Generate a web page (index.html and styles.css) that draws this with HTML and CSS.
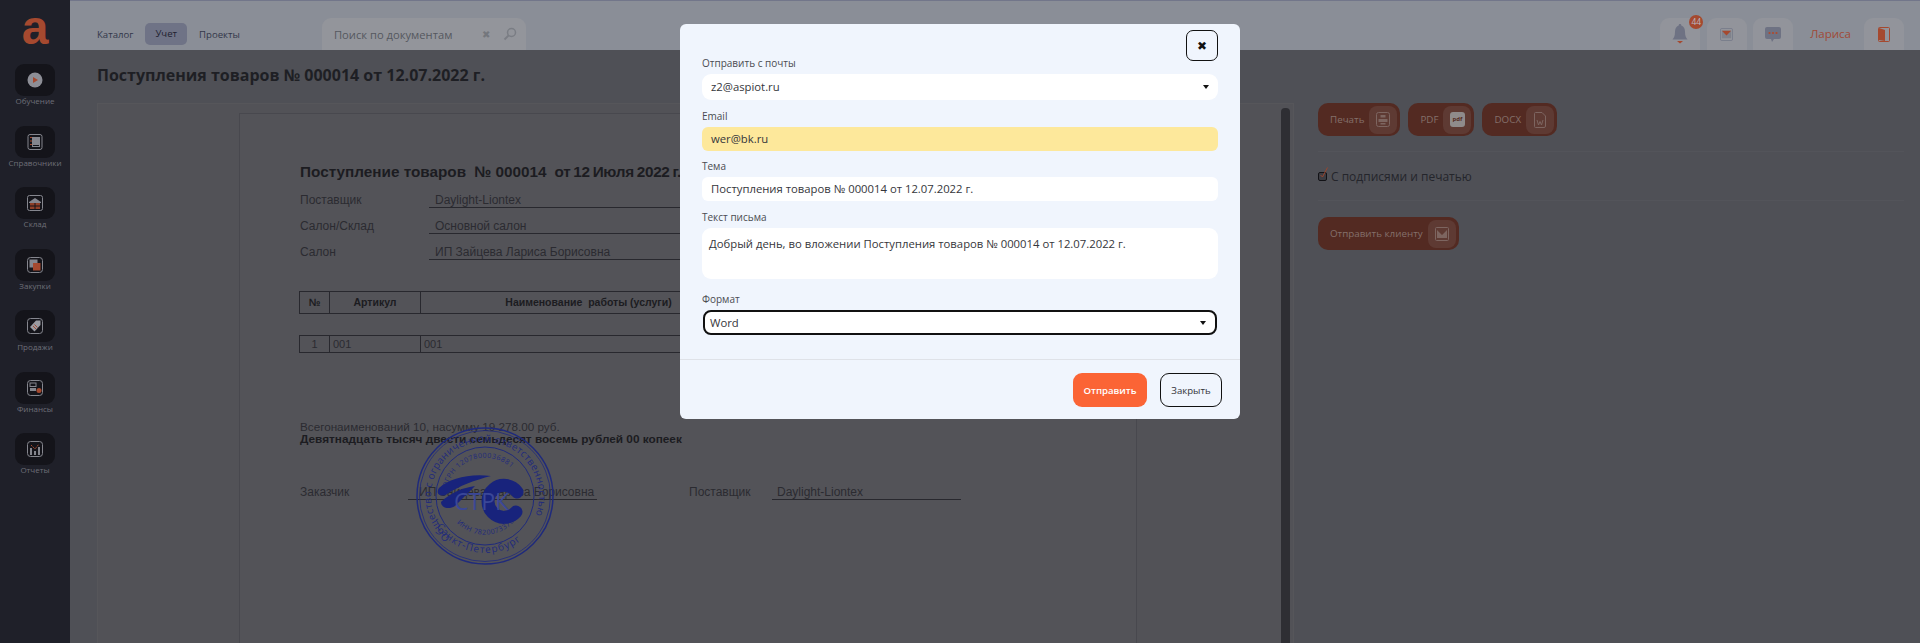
FILE: index.html
```html
<!DOCTYPE html>
<html lang="ru">
<head>
  <meta charset="UTF-8">
  <title>Поступления товаров № 000014 от 12.07.2022 г.</title>
  <link rel="stylesheet" href="styles.css">
</head>
<body>
  <div class="app">
    <aside class="sidebar">
      <div class="logo">a</div>
      <nav class="side-menu">
        <div class="side-item">
          <div class="side-tile">
            <svg width="16" height="16" viewBox="0 0 16 16"><circle cx="8" cy="8" r="7.5" fill="#8d8e96"/><path d="M6 5l5 3-5 3z" fill="#a5492f"/></svg>
          </div>
          <span>Обучение</span>
        </div>
        <div class="side-item">
          <div class="side-tile">
            <svg width="16" height="16" viewBox="0 0 16 16"><rect x="1" y="0.5" width="14" height="15" rx="2" fill="none" stroke="#85868e"/><rect x="5" y="3" width="8" height="10" fill="#85868e"/><path d="M3 3.500h2M3 7h2M3 10.500h2" stroke="#a5492f" stroke-width="1.200"/><path d="M6 11.500h6" stroke="#14141a"/></svg>
          </div>
          <span>Справочники</span>
        </div>
        <div class="side-item">
          <div class="side-tile">
            <svg width="16" height="16" viewBox="0 0 16 16"><rect x="0.500" y="0.500" width="15" height="15" rx="2" fill="none" stroke="#85868e"/><path d="M2 7l6-4 6 4v1H2z" fill="#85868e"/><rect x="3" y="8" width="10" height="6" fill="#8f3f28"/><path d="M8 8v6M3 11h10" stroke="#14141a"/></svg>
          </div>
          <span>Склад</span>
        </div>
        <div class="side-item">
          <div class="side-tile">
            <svg width="16" height="16" viewBox="0 0 16 16"><rect x="0.500" y="0.500" width="15" height="15" rx="3" fill="none" stroke="#85868e"/><rect x="2.500" y="2.500" width="8" height="8" fill="#85868e"/><rect x="6" y="6" width="7.500" height="7.500" fill="#a5492f"/></svg>
          </div>
          <span>Закупки</span>
        </div>
        <div class="side-item">
          <div class="side-tile">
            <svg width="16" height="16" viewBox="0 0 16 16"><rect x="0.500" y="0.500" width="15" height="15" rx="3" fill="none" stroke="#85868e"/><path d="M9 2.500h4.500V7L7.500 13.500 3 9z" fill="#9a9ba2"/><path d="M6 8l3 3M7.500 6.500l3 3" stroke="#a5492f"/></svg>
          </div>
          <span>Продажи</span>
        </div>
        <div class="side-item">
          <div class="side-tile">
            <svg width="16" height="16" viewBox="0 0 16 16"><rect x="0.500" y="0.500" width="15" height="15" rx="3" fill="none" stroke="#85868e"/><rect x="3" y="3" width="6" height="3.500" fill="none" stroke="#85868e"/><rect x="3" y="8" width="6" height="3" fill="#85868e"/><circle cx="12" cy="10.500" r="2.500" fill="#a5492f"/></svg>
          </div>
          <span>Финансы</span>
        </div>
        <div class="side-item">
          <div class="side-tile">
            <svg width="16" height="16" viewBox="0 0 16 16"><rect x="0.500" y="0.500" width="15" height="15" rx="3" fill="none" stroke="#85868e"/><path d="M3 7h2v7H3zM7 10h2v4H7zM11 6h2v8h-2z" fill="#85868e"/><path d="M4 4l4 4 4-5" fill="none" stroke="#a5492f" stroke-dasharray="2 1"/></svg>
          </div>
          <span>Отчеты</span>
        </div>
      </nav>
    </aside>

    <div class="main">
      <header class="topbar">
        <nav class="tabs">
          <a class="tab">Каталог</a>
          <a class="tab tab-active">Учет</a>
          <a class="tab">Проекты</a>
        </nav>
        <div class="search">
          <span class="search-text">Поиск по документам</span>
          <span class="search-clear">✖</span>
          <svg width="14" height="14" viewBox="0 0 14 14"><circle cx="8.500" cy="5.500" r="4" fill="none" stroke="#7a7d84" stroke-width="1.500"/><path d="M5.500 8.500L1.500 12.500" stroke="#7a7d84" stroke-width="1.800"/></svg>
        </div>
        <div class="top-tools">
          <div class="tool-tile">
            <svg width="16" height="22" viewBox="0 0 16 22"><path d="M8 1c1 0 1.300.7 1.300 1.600C12 3.600 13 6 13 9c0 4 1.200 6 2.500 7.500H.5C1.800 15 3 13 3 9c0-3 1-5.400 3.700-6.400C6.700 1.700 7 1 8 1z" fill="#6e7283"/><path d="M5 18h6l-3 2.500z" fill="#a5492f"/></svg>
            <span class="badge">44</span>
          </div>
          <div class="tool-tile">
            <svg width="13" height="13" viewBox="0 0 14 14"><rect x="0.500" y="0.500" width="13" height="13" rx="1.500" fill="none" stroke="#787c8a"/><rect x="2" y="3" width="10" height="8" fill="#7f828c"/><path d="M2 3h10L7 8z" fill="#a5492f"/></svg>
          </div>
          <div class="tool-tile">
            <svg width="16" height="15" viewBox="0 0 16 15"><path d="M2 0h12a2 2 0 012 2v8a2 2 0 01-2 2H9l-2 3-1-3H2a2 2 0 01-2-2V2a2 2 0 012-2z" fill="#6e7283"/><circle cx="4.500" cy="6" r="1.100" fill="#b04a2e"/><circle cx="8" cy="6" r="1.100" fill="#b04a2e"/><circle cx="11.500" cy="6" r="1.100" fill="#b04a2e"/></svg>
          </div>
          <span class="user-name">Лариса</span>
          <div class="tool-tile">
            <svg width="12" height="15" viewBox="0 0 12 15"><rect x="0.500" y="0.500" width="11" height="14" rx="1" fill="none" stroke="#a5492f"/><path d="M1 1l6 2v11l-6-1z" fill="#a5492f"/></svg>
          </div>
        </div>
      </header>

      <h1 class="page-title">Поступления товаров № 000014 от 12.07.2022 г.</h1>

      <div class="content">
        <section class="doc-panel">
          <div class="paper">
            <h2 class="doc-title"><span>Поступление товаров</span><span>№ 000014</span><span class="doc-date">от 12 Июля 2022 г.</span></h2>
            <div class="doc-row"><span class="doc-key">Поставщик</span><span class="doc-val">Daylight-Liontex</span></div>
            <div class="doc-row"><span class="doc-key">Салон/Склад</span><span class="doc-val">Основной салон</span></div>
            <div class="doc-row"><span class="doc-key">Салон</span><span class="doc-val">ИП Зайцева Лариса Борисовна</span></div>

            <div class="doc-table doc-head">
              <div class="cell cell-num">№</div>
              <div class="cell cell-art">Артикул</div>
              <div class="cell cell-name">Наименование&nbsp; работы (услуги)</div>
            </div>
            <div class="doc-table doc-line">
              <div class="cell cell-num">1</div>
              <div class="cell cell-art">001</div>
              <div class="cell cell-name">001</div>
            </div>

            <p class="doc-total">Всегонаименований 10, насумму 19 278.00 руб.</p>
            <p class="doc-words">Девятнадцать тысяч двести семьдесят восемь рублей 00 копеек</p>

            <div class="signs">
              <span class="sign-key">Заказчик</span>
              <span class="sign-val sign-left">ИП Зайцева Лариса Борисовна</span>
              <span class="sign-key sign-key2">Поставщик</span>
              <span class="sign-val sign-right">Daylight-Liontex</span>
            </div>

            <svg class="stamp" width="140" height="140" viewBox="0 0 140 140">
              <defs>
                <path id="arc-out" d="M70 70m-54 0a54 54 0 1 1 108 0a54 54 0 1 1-108 0"/>
                <path id="arc-bottom" d="M14 84a58 58 0 0 0 112 0"/>
                <path id="arc-top" d="M32 62a39 39 0 0 1 76 0"/>
                <path id="arc-low" d="M38 92a39 39 0 0 0 64 0"/>
              </defs>
              <g fill="none" stroke="#1f2a7c">
                <circle cx="70" cy="70" r="68" stroke-width="1.500"/>
                <circle cx="70" cy="70" r="65.500" stroke-width="0.800"/>
                <circle cx="70" cy="70" r="49" stroke-width="1"/>
              </g>
              <g fill="#1f2a7c" font-family="'Open Sans', sans-serif">
                <text font-size="10" letter-spacing="0.300" transform="rotate(-50 70 70)"><textPath href="#arc-out">Общество с ограниченной ответственностью</textPath></text>
                <text font-size="10" letter-spacing="1"><textPath href="#arc-bottom" startOffset="12%">Санкт-Петербург</textPath></text>
                <text font-size="7" letter-spacing="0.500"><textPath href="#arc-top">ОГРН 1207800036881</textPath></text>
                <text font-size="7" letter-spacing="0.500"><textPath href="#arc-low" startOffset="8%">ИНН 7820073376</textPath></text>
              </g>
              <g fill="#18237c">
                <path d="M76 50C56 47 34 52 24 62c-4 6 2 10 8 6 12-8 28-14 44-18z"/>
                <path d="M60 60c-14 2-26 8-34 16 0 6 8 8 14 4 6-6 12-12 20-20z"/>
              </g>
              <path d="M102 66a16 16 0 1 0-1 20" fill="none" stroke="#18237c" stroke-width="13" stroke-linecap="round"/>
              <text x="39" y="84" font-size="23" fill="#3a4798" font-family="'Open Sans', sans-serif">СТРК</text>
            </svg>
          </div>
          <div class="doc-scroll"></div>
        </section>

        <aside class="side-panel">
          <div class="side-actions">
            <button class="act-btn">Печать<span class="act-icon"><svg width="14" height="15" viewBox="0 0 14 15"><rect x="0.500" y="0.500" width="13" height="14" rx="2" fill="none" stroke="#7d6560"/><path d="M4.500 3h5v2.500h-5zM2.500 7h9v3h-9zM4.500 11h5v1.500h-5z" fill="#7d6560"/></svg></span></button>
            <button class="act-btn">PDF<span class="act-icon"><b class="pdf-mark">pdf</b></span></button>
            <button class="act-btn">DOCX<span class="act-icon"><svg width="12" height="16" viewBox="0 0 12 16"><path d="M1.500.5H8L11.500 4v10a1.500 1.500 0 01-1.500 1.500H1.500A1 1 0 01.500 14.500V1.500a1 1 0 011-1z" fill="none" stroke="#7d6560"/><path d="M3 8l1.500 5L6 9.500 7.500 13 9 8" fill="none" stroke="#7d6560"/></svg></span></button>
          </div>
          <label class="check-row">
            <span class="check-box"><svg width="10" height="13" viewBox="0 0 10 13"><path d="M1.500 8l2 2 5-9.500" fill="none" stroke="#9a452d"/></svg></span>
            С подписями и печатью
          </label>
          <div class="send-row">
            <button class="act-btn">Отправить клиенту<span class="act-icon"><svg width="14" height="14" viewBox="0 0 14 14"><rect x="0.500" y="0.500" width="13" height="13" rx="1" fill="none" stroke="#7d6560"/><path d="M2 3l5 5 5-5v8H2z" fill="#7d6560"/></svg></span></button>
          </div>
        </aside>
      </div>
    </div>
  </div>

  <div class="modal">
    <button class="modal-close">✖</button>
    <div class="modal-body">
      <label class="field-label">Отправить с почты</label>
      <div class="field field-from">z2@aspiot.ru<i class="caret"></i></div>
      <label class="field-label">Email</label>
      <div class="field field-email">wer@bk.ru</div>
      <label class="field-label">Тема</label>
      <div class="field">Поступления товаров № 000014 от 12.07.2022 г.</div>
      <label class="field-label">Текст письма</label>
      <div class="field field-text">Добрый день, во вложении Поступления товаров № 000014 от 12.07.2022 г.</div>
      <label class="field-label">Формат</label>
      <div class="field field-format">Word<i class="caret"></i></div>
    </div>
    <div class="modal-foot">
      <button class="btn-send">Отправить</button>
      <button class="btn-close">Закрыть</button>
    </div>
  </div>
</body>
</html>
```

FILE: styles.css
```css
* {
  box-sizing: border-box;
}
html, body {
  margin: 0;
  height: 100%;
  overflow: hidden;
}
body {
  font-family: 'Open Sans', sans-serif;
  background: #4f5056;
  color: #26272c;
}
button {
  font-family: inherit;
  cursor: pointer;
}
.app {
  display: flex;
  height: 643px;
  overflow: hidden;
}

/* sidebar */
.sidebar {
  width: 70px;
  flex: none;
  background: #1f2029;
  display: flex;
  flex-direction: column;
  align-items: center;
}
.logo {
  height: 64px;
  padding-top: 7px;
  font-family: 'Liberation Sans', sans-serif;
  font-weight: bold;
  font-size: 48px;
  line-height: 42px;
  color: #a5492f;
}
.side-menu {
  display: flex;
  flex-direction: column;
  gap: 15.500px;
  width: 100%;
}
.side-item {
  display: flex;
  flex-direction: column;
  align-items: center;
  height: 46px;
  font-size: 8px;
  line-height: 9px;
  color: #6e6f78;
  white-space: nowrap;
}
.side-tile {
  width: 40px;
  height: 32px;
  flex: none;
  border-radius: 9px;
  background: #14141a;
  display: flex;
  align-items: center;
  justify-content: center;
}

/* top bar */
.main {
  flex: 1;
  min-width: 0;
  display: flex;
  flex-direction: column;
}
.topbar {
  height: 50px;
  flex: none;
  display: flex;
  align-items: flex-end;
  padding: 0 16px 0 27px;
  background: #8a8e97;
  border-top: 1px solid #72768a;
}
.tabs {
  display: flex;
  align-items: center;
  gap: 12px;
  height: 22px;
  margin-bottom: 5px;
  font-size: 9.600px;
  color: #33374a;
}
.tab-active {
  height: 22px;
  line-height: 22px;
  padding: 0 10px;
  background: #6f7386;
  border-radius: 5px;
  color: #1f2230;
}
.search {
  width: 204px;
  height: 32px;
  margin-left: 82px;
  padding: 0 6px 0 12px;
  display: flex;
  align-items: center;
  background: #93959b;
  border-radius: 9px 9px 0 0;
  font-size: 11.200px;
  color: #55585f;
}
.search-text {
  width: 148px;
  white-space: nowrap;
}
.search-clear {
  width: 21px;
  font-size: 10px;
  color: #74777d;
}
.top-tools {
  margin-left: auto;
  display: flex;
  align-items: flex-end;
  gap: 6.500px;
}
.tool-tile {
  position: relative;
  width: 40px;
  height: 32px;
  display: flex;
  align-items: center;
  justify-content: center;
  background: #92949b;
  border-radius: 9px 9px 0 0;
}
.badge {
  position: absolute;
  top: -3px;
  right: -3px;
  width: 14px;
  height: 14px;
  border-radius: 50%;
  background: #a5492f;
  color: #b9bac0;
  font-size: 8.500px;
  line-height: 14px;
  text-align: center;
}
.user-name {
  height: 32px;
  line-height: 32px;
  margin: 0 6.500px 0 10.500px;
  font-size: 11.500px;
  color: #a04a36;
}

/* content */
.page-title {
  margin: 0;
  height: 53px;
  padding: 14px 0 0 27px;
  font-size: 16px;
  line-height: 22px;
  font-weight: bold;
  color: #1e1f24;
}
.content {
  flex: 1;
  display: flex;
  min-height: 0;
  padding-left: 27px;
}
.doc-panel {
  width: 1197px;
  flex: none;
  display: flex;
  padding: 9px 3px 0 141px;
  background: #525257;
  border: 1px solid #56565a;
  border-bottom: 0;
}
.paper {
  position: relative;
  width: 898px;
  flex: none;
  padding: 49px 0 0 60px;
  background: #535358;
  border: 1px solid #48484e;
  border-bottom: 0;
  font-family: 'Liberation Sans', sans-serif;
  font-size: 12px;
  color: #2b2b31;
}
.doc-title {
  display: flex;
  gap: 8px;
  margin: 0 0 8.500px;
  font-size: 15.300px;
  line-height: 18px;
  font-weight: bold;
  white-space: nowrap;
  color: #1c1c21;
}
.doc-date {
  word-spacing: -1px;
  letter-spacing: -.3px;
}
.doc-row {
  display: flex;
  height: 26px;
  padding-top: 3px;
}
.doc-key {
  width: 129px;
  flex: none;
  line-height: 14px;
}
.doc-val {
  flex: 1;
  height: 15px;
  padding-left: 6px;
  line-height: 14px;
  border-bottom: 1px solid #28282e;
}
.doc-table {
  display: flex;
  width: 860px;
  margin-left: -1px;
  border: 1px solid #28282e;
}
.doc-head {
  height: 23px;
  margin-top: 23.500px;
  font-size: 10.500px;
  font-weight: bold;
  line-height: 21px;
  text-align: center;
  color: #1c1c21;
}
.doc-line {
  height: 18px;
  margin-top: 21px;
  line-height: 16px;
  font-size: 11px;
}
.cell {
  border-right: 1px solid #28282e;
}
.cell-num {
  width: 30px;
  flex: none;
  text-align: center;
}
.cell-art {
  width: 91px;
  flex: none;
}
.doc-line .cell-art, .doc-line .cell-name {
  padding-left: 3px;
}
.cell-name {
  width: 336px;
  flex: none;
}
.doc-total {
  margin: 67px 0 0;
  font-size: 11.700px;
  line-height: 13px;
}
.doc-words {
  margin: 0;
  font-size: 11.800px;
  font-weight: bold;
  line-height: 13px;
  color: #1c1c21;
}
.signs {
  display: flex;
  margin-top: 39px;
  line-height: 14px;
}
.sign-key {
  width: 108px;
  flex: none;
}
.sign-key2 {
  width: 83px;
}
.sign-val {
  height: 15px;
  border-bottom: 1px solid #28282e;
  flex: none;
  white-space: nowrap;
}
.sign-left {
  width: 189px;
  padding-left: 11px;
  margin-right: 92px;
}
.sign-right {
  width: 189px;
  padding-left: 5px;
}
.stamp {
  position: absolute;
  left: 175px;
  top: 312px;
}
.doc-scroll {
  width: 9px;
  margin: -5px 0 0 auto;
  background: #2e2e33;
  border-radius: 4px 4px 0 0;
}

/* actions on the right */
.side-panel {
  flex: 1;
  padding: 0 16px 0 24px;
}
.side-actions {
  display: flex;
  gap: 8px;
  height: 49px;
  border-bottom: 1px solid #53545a;
}
.act-btn {
  height: 33px;
  padding: 0 3px 0 12px;
  display: inline-flex;
  align-items: center;
  gap: 5px;
  background: #532a22;
  color: #84706b;
  border: 0;
  border-radius: 10px;
  font-size: 9.800px;
  white-space: nowrap;
}
.act-icon {
  width: 28px;
  height: 28px;
  display: flex;
  align-items: center;
  justify-content: center;
  background: #5e3a33;
  border-radius: 8px;
}
.pdf-mark {
  width: 15px;
  height: 15px;
  border-radius: 3px;
  background: #8f8b8b;
  color: #532a22;
  font-size: 6px;
  line-height: 15px;
  text-align: center;
}
.check-row {
  display: flex;
  align-items: center;
  gap: 4px;
  height: 49px;
  font-size: 12px;
  color: #24252b;
  border-bottom: 1px solid #53545a;
}
.check-box {
  width: 9px;
  height: 9px;
  flex: none;
  background: #3c3c42;
  border: 1.500px solid #121216;
  border-radius: 2px;
  display: flex;
  align-items: flex-end;
}
.check-box svg {
  flex: none;
}
.send-row {
  padding-top: 16px;
}

/* modal window */
.modal {
  position: fixed;
  left: 680px;
  top: 24px;
  width: 560px;
  height: 395px;
  background: #f0f5fd;
  border-radius: 6px;
  color: #35363b;
}
.modal-close {
  position: absolute;
  top: 6px;
  right: 22px;
  width: 32px;
  height: 31px;
  padding: 0;
  background: transparent;
  border: 1px solid #111;
  border-radius: 7px;
  font-size: 12px;
  color: #111;
}
.modal-body {
  height: 336px;
  padding: 32px 22px 0;
  border-bottom: 1px solid #dfe2e8;
}
.field-label {
  display: block;
  height: 18px;
  font-size: 10px;
  line-height: 14px;
  color: #4a4b51;
}
.field {
  position: relative;
  height: 24px;
  margin-bottom: 9px;
  padding-left: 9px;
  background: #fff;
  border-radius: 6px;
  font-size: 11.300px;
  line-height: 24px;
  white-space: nowrap;
}
.field-from {
  height: 26px;
  line-height: 26px;
  border-radius: 9px;
}
.field-email {
  margin-bottom: 8px;
  background: #fde89b;
}
.field-text {
  height: 51px;
  margin-bottom: 13px;
  padding: 6px 7px;
  border-radius: 9px;
  line-height: 20px;
}
.field-format {
  height: 25px;
  margin: 0 1px;
  padding-left: 5px;
  line-height: 21px;
  border: 2px solid #111;
  border-radius: 8px;
}
.caret {
  position: absolute;
  right: 9px;
  top: 50%;
  margin-top: -2px;
  border: 3.500px solid transparent;
  border-top: 4px solid #111;
  border-bottom: 0;
}
.modal-foot {
  display: flex;
  justify-content: flex-end;
  gap: 13px;
  padding: 13px 18px 0 0;
}
.btn-send, .btn-close {
  height: 34px;
  padding: 0;
  border-radius: 9px;
  font-size: 9.600px;
}
.btn-send {
  width: 74px;
  background: #fb6435;
  border: 0;
  color: #fff;
  font-weight: 600;
}
.btn-close {
  width: 62px;
  background: transparent;
  border: 1px solid #111;
  color: #33343a;
}
```
